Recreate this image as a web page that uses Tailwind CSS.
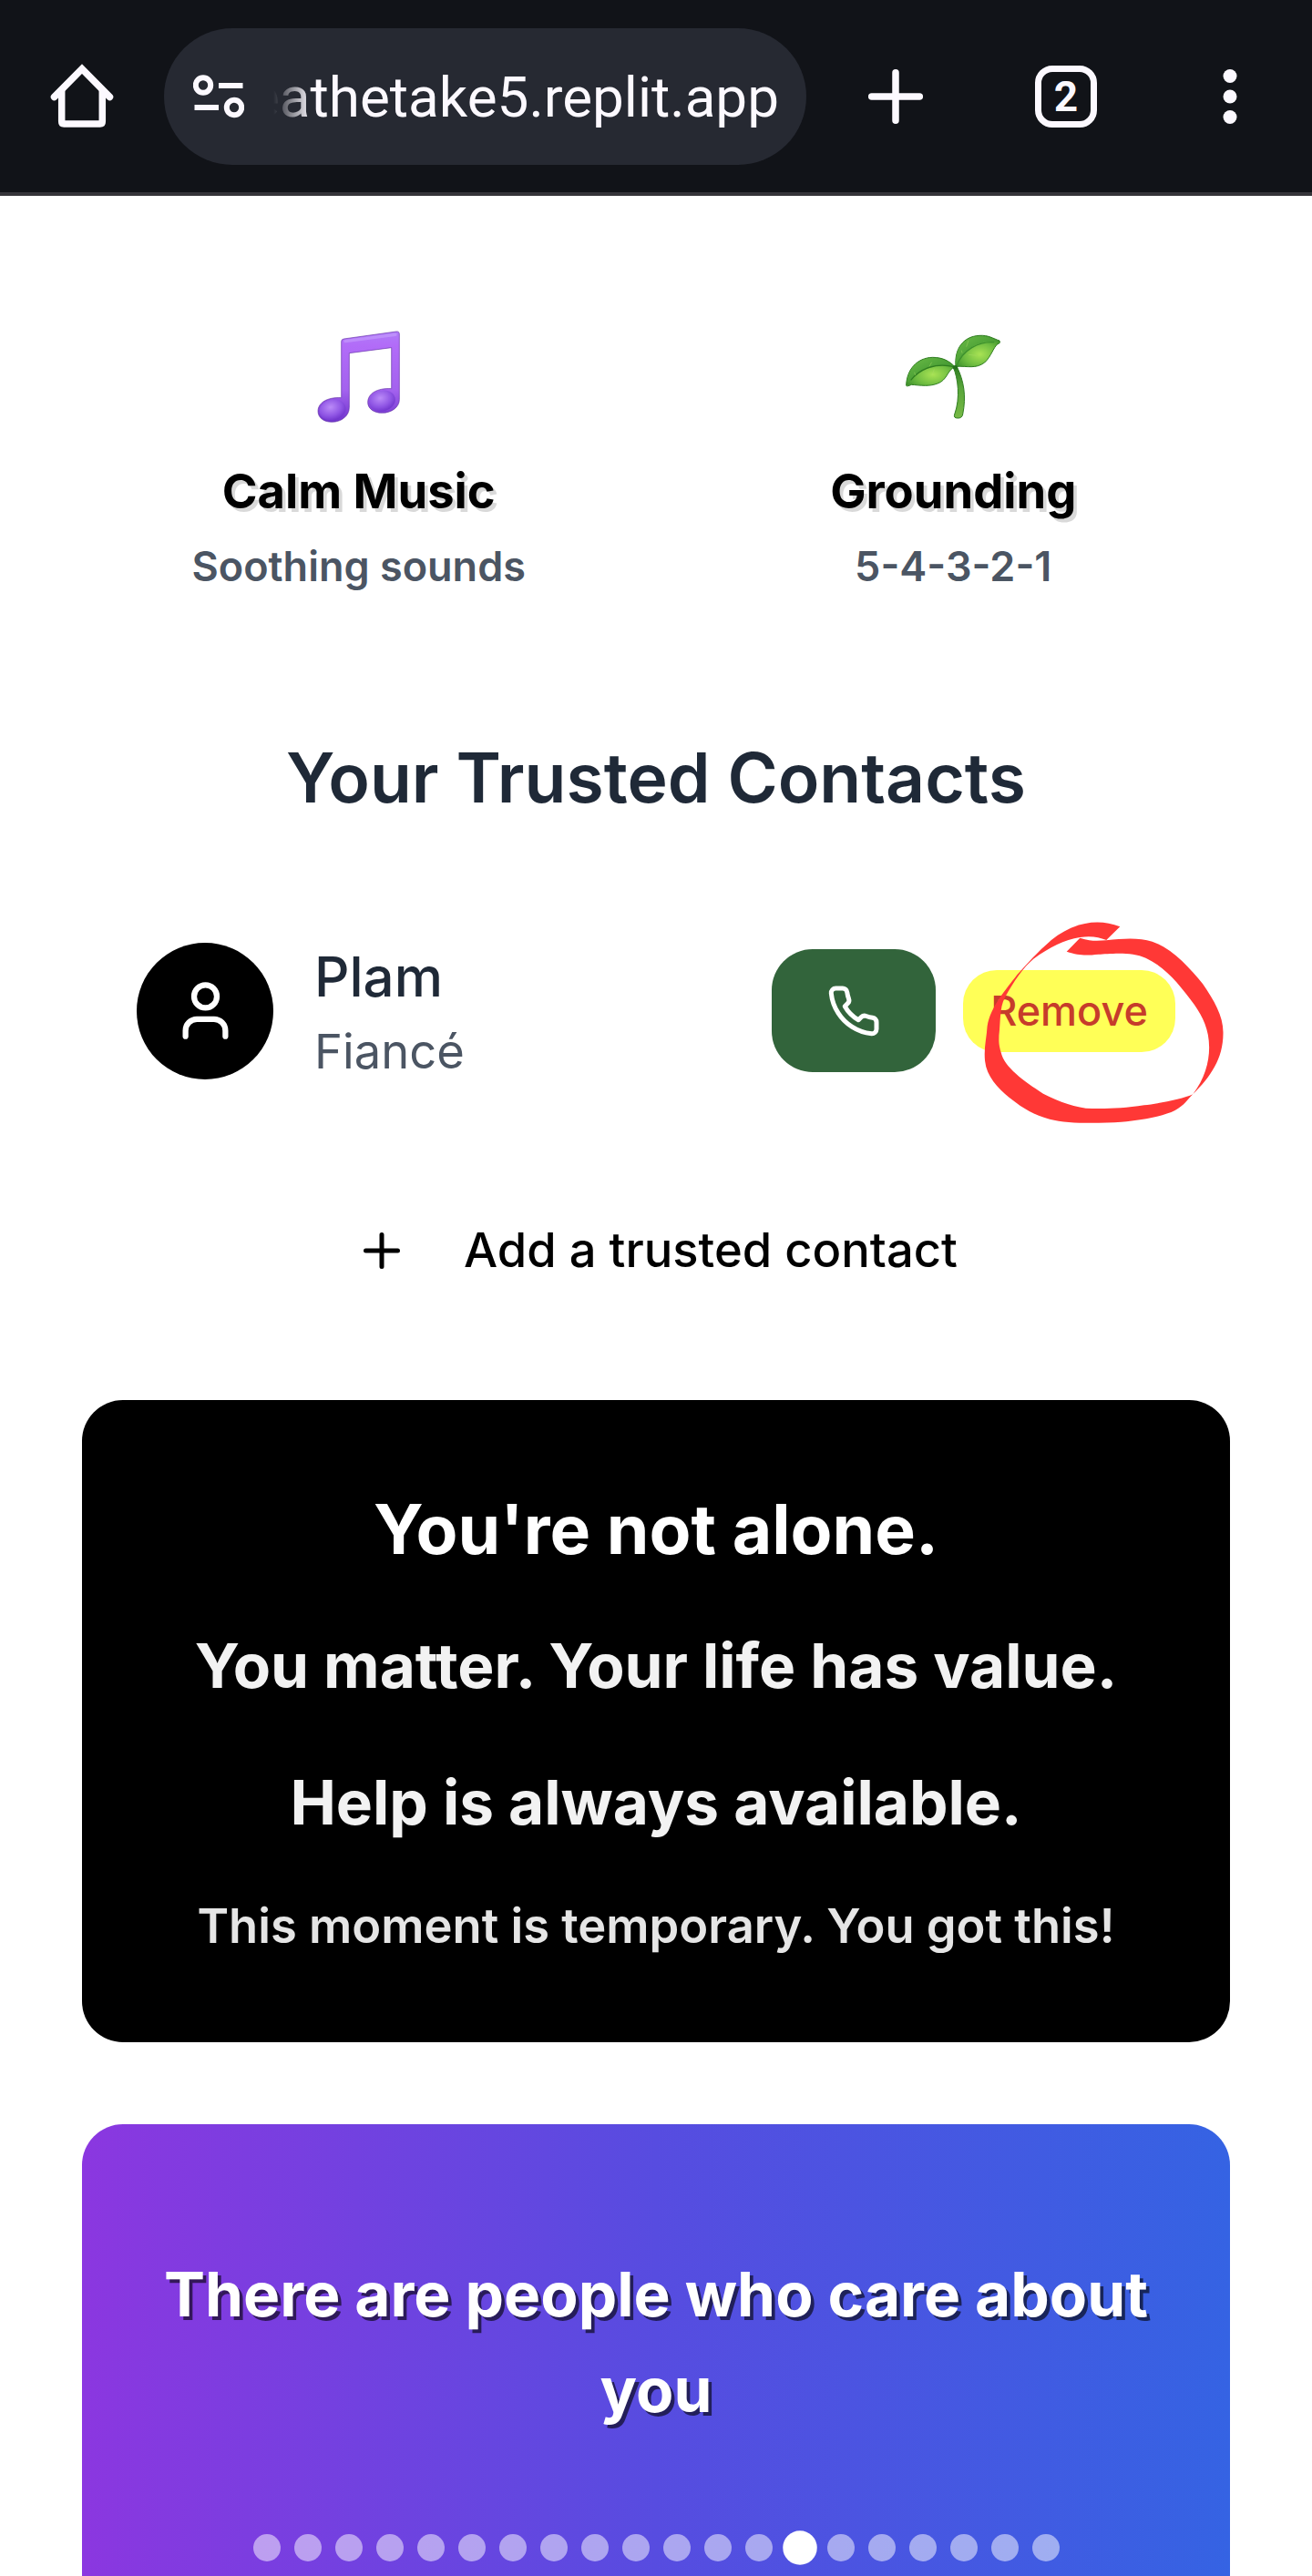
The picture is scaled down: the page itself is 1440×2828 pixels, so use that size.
<!DOCTYPE html>
<html lang="en">
<head>
<meta charset="utf-8">
<title>Take 5</title>
<script src="https://cdn.jsdelivr.net/npm/@tailwindcss/browser@4"></script>
</head>
<body class="h-[2828px] overflow-hidden bg-white font-['Inter',sans-serif]">
<header class="flex h-[215px] items-center border-b-4 border-[#353439] bg-[#111318] text-[#fcf9ff]">
  <svg class="ml-[54px] size-[72px] shrink-0" viewBox="0 0 72 72" fill="none" stroke="currentColor" stroke-width="7.5" stroke-linecap="round" stroke-linejoin="round"><path d="M5.5 36.500 36 5.500l30.500 31" stroke-linejoin="miter"/><path d="M13.700 30v33.500q0 2.500 2.500 2.500h39.600q2.500 0 2.500-2.500V30"/></svg>
  <div class="ml-[54px] flex h-[150px] w-[705px] shrink-0 items-center rounded-full bg-[#262932] pl-8">
    <svg class="h-12 w-14 shrink-0" viewBox="0 0 56 48" fill="none" stroke="currentColor" stroke-width="6"><circle cx="11" cy="11.500" r="8.200"/><path d="M28 12h26.500M1.500 36H28"/><circle cx="45" cy="36" r="8.200"/></svg>
    <div class="ml-8 flex w-[555px] justify-end overflow-hidden pt-0.5 font-['Roboto',sans-serif] text-[62px] leading-[80px] whitespace-nowrap [mask-image:linear-gradient(to_right,transparent,black_42px)]">eathetake5.replit.app</div>
  </div>
  <svg class="ml-[66px] size-16 shrink-0" viewBox="0 0 64 64" stroke="currentColor" stroke-width="7.500" stroke-linecap="round"><path d="M32 5.700v52.600M5.700 32h52.600"/></svg>
  <div class="ml-[121px] flex h-[68px] w-[68px] shrink-0 items-center justify-center rounded-[19px] border-[7.500px] border-current pt-px font-['Roboto',sans-serif] text-[46px] leading-none font-bold">2</div>
  <svg class="ml-[138px] h-[60px] w-4 shrink-0" viewBox="0 0 16 60" fill="currentColor"><circle cx="8" cy="7.500" r="7.500"/><circle cx="8" cy="30" r="7.500"/><circle cx="8" cy="52.500" r="7.500"/></svg>
</header>

<main class="px-[90px]">
  <section class="grid grid-cols-2 gap-[45px] pt-[145px] text-center">
    <div class="flex flex-col items-center">
      <svg class="h-[107px] w-[97px]" viewBox="496 60 291 321" fill="url(#note)" stroke="#5c28a0" stroke-opacity=".6" stroke-width="3">
        <defs>
          <linearGradient id="note" x1="0" y1="0" x2="0" y2="1"><stop offset="0" stop-color="#b07cf8"/><stop offset=".15" stop-color="#b26cf8"/><stop offset=".65" stop-color="#a362ee"/><stop offset="1" stop-color="#6f35cc"/></linearGradient>
          <radialGradient id="head" cx=".45" cy=".35" r=".7"><stop offset="0" stop-color="#bb8bf8"/><stop offset=".6" stop-color="#8f55e4"/><stop offset="1" stop-color="#6c2fc9"/></radialGradient>
        </defs>
        <path d="M585 105q0-8 8-9l172-24q11-2 11 9v215c0 25-26 44-57 44-27 0-47-14-47-35 0-28 30-48 78-45V125l-139 18v179c0 28-26 48-57 48-27 0-46-14-46-36 0-27 30-47 77-44z"/>
        <path d="M598 104 763 82" stroke="#cfadff" stroke-width="10" stroke-linecap="round" stroke-opacity=".45"/>
        <ellipse cx="556" cy="330" rx="44" ry="34" fill="url(#head)" stroke="none" transform="rotate(-14 556 330)"/>
        <ellipse cx="720" cy="300" rx="43" ry="34" fill="url(#head)" stroke="none" transform="rotate(-14 720 300)"/>
      </svg>
      <h3 class="mt-[35px] text-[52.5px] leading-[75px] font-bold text-black [text-shadow:3.75px_3.75px_0_rgb(0_0_0/0.15)]">Calm Music</h3>
      <p class="mt-[15px] text-[45px] leading-[60px] font-semibold text-[#4b5563]">Soothing sounds</p>
    </div>
    <div class="flex flex-col items-center">
      <svg class="h-[107px] w-[110px]" viewBox="396 60 330 321" stroke="#2f7d20" stroke-width="3" stroke-linejoin="round">
        <defs>
          <radialGradient id="leaf" cx=".55" cy=".6" r=".6"><stop offset="0" stop-color="#a9e354"/><stop offset=".6" stop-color="#6fbd41"/><stop offset="1" stop-color="#43962f"/></radialGradient>
          <linearGradient id="leafTop" x1="0" y1="0" x2="1" y2="1"><stop offset="0" stop-color="#6cbc47"/><stop offset="1" stop-color="#2c8526"/></linearGradient>
          <linearGradient id="stem" x1="0" y1="0" x2="0" y2="1"><stop offset="0" stop-color="#2f7e22"/><stop offset=".4" stop-color="#58a53a"/><stop offset="1" stop-color="#77b945"/></linearGradient>
        </defs>
        <path fill="url(#stem)" d="M562 190C577 225 586 290 566 345q-4 12 10 12 14 1 17-12C605 285 597 235 574 188z"/>
        <path fill="url(#leaf)" d="M407 250C408 198 442 158 494 157c33 0 55 12 73 31-24 12-22 33-46 50-33 19-73 10-97 9q-15 7-17 3z"/>
        <path fill="url(#leafTop)" stroke="none" d="M409 240C413 193 449 159 494 159c31 0 52 12 70 29-57-12-104 0-142 45z"/>
        <path fill="none" stroke-width="4" d="M422 232c33-40 84-58 142-44"/>
        <path fill="none" stroke="#a8dc67" stroke-opacity=".45" d="m491 173-8 14m16 9-7 20m-58-10 3 10"/>
        <path fill="url(#leaf)" d="M570 187C565 129 594 88 648 85c29-2 45 10 66 17q4 9-6 11c-15 12-21 41-43 61-30 22-55 11-95 13z"/>
        <path fill="url(#leafTop)" stroke="none" d="M571 182C567 129 597 89 648 87c27-1 43 9 61 17-63-2-103 19-133 71z"/>
        <path fill="none" stroke="#3c902d" stroke-width="4" d="M573 184c21-52 71-80 124-77"/>
        <path fill="none" stroke="#a8dc67" stroke-opacity=".45" d="m612 101-7 21m7 26 26 3m-49-17 2 9"/>
        <ellipse cx="568" cy="190" rx="8" ry="7" fill="#256f1d" stroke="none"/>
      </svg>
      <h3 class="mt-[35px] text-[52.5px] leading-[75px] font-bold text-black [text-shadow:3.75px_3.75px_0_rgb(0_0_0/0.15)]">Grounding</h3>
      <p class="mt-[15px] text-[45px] leading-[60px] font-semibold text-[#4b5563]">5-4-3-2-1</p>
    </div>
  </section>

  <h2 class="mt-[149px] text-center text-[75px] leading-[105px] font-semibold text-[#1f2937]">Your Trusted Contacts</h2>

  <section class="relative mt-[121px] flex items-center px-[60px]">
    <div class="flex size-[150px] items-center justify-center rounded-full bg-black text-white">
      <svg class="size-[75px]" viewBox="0 0 24 24" fill="none" stroke="currentColor" stroke-width="2" stroke-linecap="round"><path d="M19 21v-2a4 4 0 0 0-4-4H9a4 4 0 0 0-4 4v2"/><circle cx="12" cy="7" r="4"/></svg>
    </div>
    <div class="ml-[45px]">
      <p class="text-[60px] leading-[90px] font-medium text-[#1f2937]">Plam</p>
      <p class="text-[52.5px] leading-[75px] text-[#4b5563]">Fiancé</p>
    </div>
    <button class="ml-auto flex h-[135px] w-[180px] items-center justify-center rounded-[45px] bg-[#32643b] text-white">
      <svg class="size-[60px]" viewBox="0 0 24 24" fill="none" stroke="currentColor" stroke-width="2" stroke-linecap="round" stroke-linejoin="round"><path d="M22 16.920v3a2 2 0 0 1-2.180 2 19.790 19.790 0 0 1-8.630-3.070 19.500 19.500 0 0 1-6-6 19.790 19.790 0 0 1-3.070-8.670A2 2 0 0 1 4.110 2h3a2 2 0 0 1 2 1.720 12.840 12.840 0 0 0 .7 2.810 2 2 0 0 1-.45 2.110L8.090 9.910a16 16 0 0 0 6 6l1.270-1.270a2 2 0 0 1 2.110-.45 12.840 12.840 0 0 0 2.810.7A2 2 0 0 1 22 16.920z"/></svg>
    </button>
    <button class="ml-[30px] h-[90px] w-[233px] rounded-[37px] bg-[#ffff57] text-[45px] leading-[60px] font-medium text-[#c63c2b]">Remove</button>
    <!-- hand-drawn marker ring over the remove button -->
    <svg class="pointer-events-none absolute -top-[37px] left-[730px] h-[260px] w-[560px]" viewBox="0 0 1568 780" preserveAspectRatio="none" fill="#ff3836">
      <path d="M1146 82C1075 52 1000 70 935 126C890 168 862 203 830 240C795 290 748 345 738 410C736 450 727 480 731 524C736 575 770 612 805 644C855 686 880 700 930 716C990 733 1090 729 1150 725C1220 718 1280 706 1315 687C1345 670 1352 652 1370 634C1340 650 1260 665 1220 670C1160 680 1110 682 1060 681C1010 680 960 658 910 632C850 590 790 545 780 495C772 465 774 455 774 440C779 400 775 350 792 316C820 260 850 215 880 188C930 150 975 125 1023 117C1060 112 1080 117 1104 126Z"/>
      <path d="M1023 119C1060 132 1080 128 1104 127C1160 120 1205 118 1245 131C1305 153 1360 217 1400 270C1435 325 1463 375 1463 430C1464 515 1425 575 1370 634C1405 585 1420 530 1420 480C1420 420 1400 380 1375 340C1330 273 1285 215 1225 185C1180 162 1110 172 1080 173C1035 178 1020 176 982 164Z"/>
    </svg>
  </section>

  <button class="mx-auto mt-[143px] flex h-[75px] items-center gap-[60px] text-[52.5px] leading-[75px] font-medium text-black">
    <svg class="size-[60px]" viewBox="0 0 24 24" stroke="currentColor" stroke-width="2" stroke-linecap="round"><path d="M5 12h14M12 5v14"/></svg>
    <span>Add a trusted contact</span>
  </button>

  <section class="mt-[127px] flex h-[705px] flex-col gap-[45px] rounded-[45px] bg-black pt-[89px] text-center font-bold">
    <p class="text-[75px] leading-[105px] text-white">You're not alone.</p>
    <p class="text-[67.5px] leading-[105px] text-[#f2f2f2]">You matter. Your life has value.</p>
    <p class="text-[67.5px] leading-[105px] text-[#f2f2f2]">Help is always available.</p>
    <p class="mt-px text-[52.5px] leading-[75px] font-semibold text-[#e5e5e5]">This moment is temporary. You got this!</p>
  </section>

  <section class="mt-[90px] flex h-[600px] flex-col items-center rounded-[45px] bg-[linear-gradient(to_right,#8b37e0,#574ce0,#3563e3)] pt-[134px]">
    <p class="px-[60px] text-center text-[67.5px] leading-[105px] font-bold text-white [text-shadow:3.75px_3.75px_0_rgb(0_0_0/0.6)]">There are people who care about you</p>
    <div class="mt-[106px] flex gap-[15px]">
      <i class="size-[30px] rounded-full bg-white/50"></i><i class="size-[30px] rounded-full bg-white/50"></i><i class="size-[30px] rounded-full bg-white/50"></i><i class="size-[30px] rounded-full bg-white/50"></i><i class="size-[30px] rounded-full bg-white/50"></i><i class="size-[30px] rounded-full bg-white/50"></i><i class="size-[30px] rounded-full bg-white/50"></i><i class="size-[30px] rounded-full bg-white/50"></i><i class="size-[30px] rounded-full bg-white/50"></i><i class="size-[30px] rounded-full bg-white/50"></i><i class="size-[30px] rounded-full bg-white/50"></i><i class="size-[30px] rounded-full bg-white/50"></i><i class="size-[30px] rounded-full bg-white/50"></i><i class="size-[30px] scale-125 rounded-full bg-white"></i><i class="size-[30px] rounded-full bg-white/50"></i><i class="size-[30px] rounded-full bg-white/50"></i><i class="size-[30px] rounded-full bg-white/50"></i><i class="size-[30px] rounded-full bg-white/50"></i><i class="size-[30px] rounded-full bg-white/50"></i><i class="size-[30px] rounded-full bg-white/50"></i>
    </div>
  </section>
</main>
</body>
</html>
